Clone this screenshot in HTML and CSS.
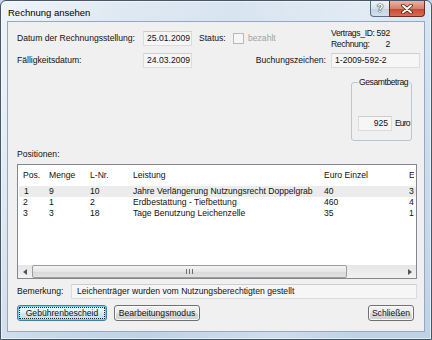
FILE: index.html
```html
<!DOCTYPE html>
<html lang="de">
<head>
    <meta charset="UTF-8">
    <title>Rechnung ansehen</title>
    <link rel="stylesheet" href="styles.css">
</head>
<body>
    <div class="window">
        <div class="titlebar">
            <span class="title">Rechnung ansehen</span>
            <span class="cap-btn help">?</span>
            <span class="cap-btn close">
                <svg width="12" height="10" viewBox="0 0 12 10">
                    <path d="M2 1.5 L10 8.5 M10 1.5 L2 8.5" stroke="#4a1a12" stroke-width="3.6" stroke-linecap="round"/>
                    <path d="M2 1.5 L10 8.5 M10 1.5 L2 8.5" stroke="#fff" stroke-width="2" stroke-linecap="round"/>
                </svg>
            </span>
        </div>
        <div class="client">
            <div class="row row-first">
                <span class="lbl lbl-main">Datum der Rechnungsstellung:</span>
                <span class="field date">25.01.2009</span>
                <span class="lbl status">Status:</span>
                <span class="check"></span>
                <span class="lbl disabled">bezahlt</span>
                <div class="contract">
                    <span>Vertrags_ID:</span><span>592</span>
                    <span>Rechnung:</span><span class="bill-no">2</span>
                </div>
            </div>
            <div class="row row-second">
                <span class="lbl lbl-main">Fälligkeitsdatum:</span>
                <span class="field date">24.03.2009</span>
                <span class="lbl booking">Buchungszeichen:</span>
                <span class="field booking-no">1-2009-592-2</span>
            </div>
            <div class="total">
                <span class="total-title">Gesamtbetrag</span>
                <div class="total-inner">
                    <span class="field amount">925</span>
                    <span class="lbl currency">Euro</span>
                </div>
            </div>
            <div class="section-label">Positionen:</div>
            <div class="list">
                <div class="list-line list-head">
                    <span>Pos.</span><span>Menge</span><span>L-Nr.</span><span>Leistung</span><span>Euro Einzel</span><span>Euro Gesamt</span>
                </div>
                <div class="list-body">
                    <div class="list-line selected">
                        <span>1</span><span>9</span><span>10</span><span>Jahre Verlängerung Nutzungsrecht Doppelgrab</span><span>40</span><span>360</span>
                    </div>
                    <div class="list-line">
                        <span>2</span><span>1</span><span>2</span><span>Erdbestattung - Tiefbettung</span><span>460</span><span>460</span>
                    </div>
                    <div class="list-line">
                        <span>3</span><span>3</span><span>18</span><span>Tage Benutzung Leichenzelle</span><span>35</span><span>105</span>
                    </div>
                </div>
                <div class="hscroll">
                    <span class="sb-arrow">
                        <svg width="4" height="6" viewBox="0 0 4 6"><path d="M4 0 L0 3 L4 6 Z" fill="#555"/></svg>
                    </span>
                    <span class="sb-thumb">
                        <svg width="7" height="5" viewBox="0 0 7 5"><path d="M0.5 0 V5 M3.5 0 V5 M6.5 0 V5" stroke="#6d6d6d" stroke-width="1"/></svg>
                    </span>
                    <span class="sb-track"></span>
                    <span class="sb-arrow">
                        <svg width="4" height="6" viewBox="0 0 4 6"><path d="M0 0 L4 3 L0 6 Z" fill="#555"/></svg>
                    </span>
                </div>
            </div>
            <div class="row remark">
                <span class="lbl remark-label">Bemerkung:</span>
                <span class="field remark-text">Leichenträger wurden vom Nutzungsberechtigten gestellt</span>
            </div>
            <div class="row buttons">
                <button class="btn btn-default" style="width: 90px"><span class="focus">Gebührenbescheid</span></button>
                <button class="btn btn-mode" style="width: 86px">Bearbeitungsmodus</button>
                <button class="btn btn-close" style="width: 46px">Schließen</button>
            </div>
        </div>
    </div>
</body>
</html>
```

FILE: styles.css
```css
body {
    margin: 0;
    padding: 0;
    background-color: #c6d6e6;
}

.window {
    width: 432px;
    height: 340px;
    box-sizing: border-box;
    border: 1px solid #45556a;
    border-radius: 6px 6px 0 0;
    background:
        linear-gradient(105deg, rgba(255, 255, 255, 0.6) 0%, rgba(255, 255, 255, 0.15) 25%, rgba(255, 255, 255, 0) 45%, rgba(255, 255, 255, 0.25) 70%, rgba(255, 255, 255, 0) 85%),
        linear-gradient(to bottom, #d9e5f1, #bfd2e5);
    box-shadow: inset 0 0 0 1px rgba(255, 255, 255, 0.55);
    display: flex;
    flex-direction: column;
    font-family: 'Liberation Sans', Arial, sans-serif;
    font-size: 8.6px;
    line-height: 11px;
    color: #111;
    overflow: hidden;
}

/* Titelleiste */
.titlebar {
    height: 20px;
    display: flex;
    align-items: flex-start;
    padding: 0 6px 0 7px;
}

.title {
    align-self: center;
    margin-top: 2px;
    margin-right: auto;
    font-size: 9.5px;
    color: #000;
}

.cap-btn {
    height: 16px;
    box-sizing: border-box;
    display: flex;
    align-items: center;
    justify-content: center;
    border: 1px solid #5d6f86;
    border-top: none;
}

.help {
    width: 19px;
    border-radius: 0 0 0 4px;
    border-right: none;
    background: linear-gradient(to bottom, #eef3f8 0%, #d9e3ee 50%, #c3d2e2 51%, #d4e0ec 100%);
    color: #fff;
    font-weight: bold;
    font-size: 11px;
    text-shadow: 0 0 1px #2c3c52, 0 0 1px #2c3c52, 0 0 1px #2c3c52;
}

.close {
    width: 36px;
    border-radius: 0 0 4px 0;
    border-color: #6b2b20;
    background: linear-gradient(to bottom, #eab4a6 0%, #d9806a 50%, #c4472e 51%, #d66f55 100%);
}

/* Clientbereich */
.client {
    flex: 1;
    margin: 0 6px 7px 6px;
    border: 1px solid #94a9c0;
    background-color: #f0f0f0;
    padding: 9px 4px 0 9px;
    display: flex;
    flex-direction: column;
}

.row {
    display: flex;
    align-items: center;
    height: 15px;
}

.lbl {
    white-space: nowrap;
}

.lbl-main {
    width: 126px;
    flex-shrink: 0;
}

.field {
    box-sizing: border-box;
    height: 15px;
    line-height: 13px;
    padding: 0 3px;
    background-color: #f6f6f6;
    border: 1px solid #dcdcdc;
    border-top-color: #cdcdcd;
    white-space: nowrap;
    overflow: hidden;
}

.date {
    width: 49px;
}

.status {
    margin-left: 7px;
    width: 34px;
}

.check {
    width: 11px;
    height: 11px;
    box-sizing: border-box;
    border: 1px solid #b9b9b9;
    background-color: #f6f6f6;
}

.disabled {
    margin-left: 4px;
    color: #a0a0a0;
}

.contract {
    margin-left: auto;
    margin-right: 1px;
    width: 88px;
    display: grid;
    grid-template-columns: auto 1fr;
    column-gap: 2px;
    line-height: 10.5px;
    letter-spacing: -0.35px;
    white-space: nowrap;
}

.bill-no {
    padding-left: 9px;
}

.row-second {
    margin-top: 7px;
}

.booking {
    margin-left: auto;
    margin-right: 5px;
}

.booking-no {
    width: 89px;
}

/* Gruppe Gesamtbetrag */
.total {
    width: 61px;
    height: 59px;
    box-sizing: border-box;
    margin: 14px 8px 0 auto;
    padding-left: 6px;
    border: 1px solid #bcc6d0;
    border-radius: 3px;
}

.total-title {
    display: block;
    width: fit-content;
    margin: -6px 0 0 0;
    padding: 0 1px;
    background-color: #f0f0f0;
    white-space: nowrap;
    letter-spacing: -0.45px;
}

.total-inner {
    display: flex;
    align-items: center;
    margin-top: 28px;
}

.amount {
    width: 34px;
    flex-shrink: 0;
    text-align: right;
}

.currency {
    margin-left: 3px;
    letter-spacing: -0.9px;
}

.section-label {
    margin-top: 8px;
}

/* Positionen */
.list {
    margin-top: 4px;
    margin-right: 3px;
    height: 115px;
    box-sizing: border-box;
    border: 1px solid #828790;
    background-color: #fff;
    display: flex;
    flex-direction: column;
    overflow: hidden;
}

.list-line {
    display: grid;
    grid-template-columns: 26px 41px 43px 191px 85px 9.5px;
    height: 11px;
    line-height: 11px;
    white-space: nowrap;
}

.list-line span {
    padding-left: 5px;
    overflow: hidden;
}

.list-head {
    height: 18px;
    line-height: 20px;
}

.list-body {
    margin-top: 3px;
}

.list-line.selected {
    background-color: #ececec;
    margin-left: 1px;
    border-radius: 2px;
    grid-template-columns: 25px 41px 43px 191px 85px 9.5px 1fr;
}

.hscroll {
    margin-top: auto;
    height: 13px;
    display: flex;
    background: linear-gradient(to bottom, #e6e6e6, #f2f2f2);
}

.sb-arrow {
    width: 13px;
    display: flex;
    align-items: center;
    justify-content: center;
}

.sb-thumb {
    width: 315px;
    margin-left: 1px;
    box-sizing: border-box;
    border: 1px solid #9c9c9c;
    border-radius: 2px;
    background: linear-gradient(to bottom, #f4f4f4 0%, #e6e6e6 50%, #d8d8d8 51%, #e2e2e2 100%);
    display: flex;
    align-items: center;
    justify-content: center;
}

.sb-track {
    flex: 1;
}

/* Bemerkung und Schaltflächen */
.remark {
    margin-top: 5px;
}

.remark-label {
    width: 54px;
    flex-shrink: 0;
}

.remark-text {
    flex: 1;
    margin-right: 3px;
    padding-left: 5px;
}

.buttons {
    margin-top: 6px;
    height: 16px;
}

.btn {
    height: 16px;
    box-sizing: border-box;
    padding: 0;
    font-family: 'Liberation Sans', Arial, sans-serif;
    font-size: 8.6px;
    color: #111;
    border: 1px solid #707070;
    border-radius: 3px;
    background: linear-gradient(to bottom, #f2f2f2 0%, #ebebeb 50%, #dddddd 51%, #cfcfcf 100%);
    box-shadow: inset 0 0 0 1px #fbfbfb;
    white-space: nowrap;
}

.btn-default {
    border-color: #3c7fb1;
    box-shadow: inset 0 0 0 1px #6fd2f7;
    background: linear-gradient(to bottom, #eef6fb 0%, #e3eff7 50%, #d3e5f1 51%, #c8deee 100%);
}

.focus {
    display: block;
    margin: 2px;
    line-height: 10px;
    outline: 1px dotted #222;
}

.btn-mode {
    margin-left: 7px;
}

.btn-close {
    margin-left: auto;
    margin-right: 6px;
}
```
